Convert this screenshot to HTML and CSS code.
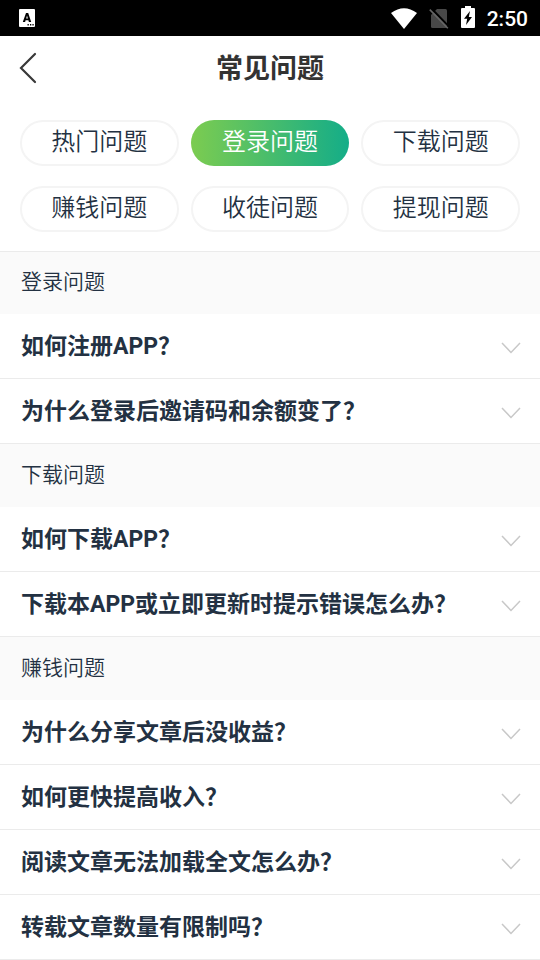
FILE: index.html
```html
<!DOCTYPE html>
<html lang="zh-CN">
<head>
<meta charset="utf-8">
<meta name="viewport" content="width=device-width, initial-scale=1">
<title>常见问题</title>
<link rel="stylesheet" href="styles.css">
</head>
<body>
<svg class="sprite" aria-hidden="true">
  <symbol id="chevron" viewBox="0 0 20 12"><path d="M1 1l9 9.500 9-9.500" fill="none" stroke="currentColor" stroke-width="1.5"/></symbol>
</svg>
<div class="status">
  <svg class="app-icon" viewBox="0 0 16 18" width="16" height="18" aria-hidden="true">
    <rect width="16" height="18" rx="1" fill="#fff"/>
    <path d="M7 4h2.200L12.200 13H9.900L9.400 11.300H6.600L6.100 13H3.800zM7.200 9.500h1.700L8 6.500z" fill="#000" fill-rule="evenodd"/>
    <path d="M8.500 15.700h1.300M11 15.700h1.300M13.400 15.700h1.300" stroke="#000" stroke-width="1.500"/>
  </svg>
  <div class="status-right">
    <svg width="26" height="21" viewBox="0 0 26 21" aria-hidden="true"><path d="M0 5Q13-4.500 26 5L13 21z" fill="#fff"/></svg>
    <svg width="20" height="21" viewBox="0 0 20 21" aria-hidden="true">
      <path d="M8 1h8.500q1.500 0 1.500 1.500V18.500q0 1.500-1.500 1.500h-13Q2 20 2 18.500V7z" fill="#484848"/>
      <path d="M2.200 .2L20 18.600" stroke="#000" stroke-width="2"/>
      <path d="M.8 1.600L18.800 20.300" stroke="#666" stroke-width="1.600"/>
    </svg>
    <svg class="battery" width="14" height="22" viewBox="0 0 14 22" aria-hidden="true">
      <path d="M4 0h6v2h3q1 0 1 1v18q0 1-1 1H1q-1 0-1-1V3q0-1 1-1h3z" fill="#fff"/>
      <path d="M9 5L3 12.800h3.200L5 19l6-8H7.800z" fill="#000"/>
    </svg>
    <time class="clock">2:50</time>
  </div>
</div>
<header class="bar">
  <button class="back" type="button" aria-label="返回">
    <svg width="18" height="32" viewBox="0 0 18 32" aria-hidden="true"><path d="M16 2L2 16l14 14" fill="none" stroke="#393939" stroke-width="2.200" stroke-linecap="round"/></svg>
  </button>
  <h1 class="title">常见问题</h1>
</header>
<nav class="tabs">
  <button class="tab" type="button">热门问题</button>
  <button class="tab active" type="button">登录问题</button>
  <button class="tab" type="button">下载问题</button>
  <button class="tab" type="button">赚钱问题</button>
  <button class="tab" type="button">收徒问题</button>
  <button class="tab" type="button">提现问题</button>
</nav>
<main>
  <section>
    <h2 class="group">登录问题</h2>
    <button class="row" type="button"><span>如何注册APP？</span><svg class="chevron"><use href="#chevron"/></svg></button>
    <button class="row" type="button"><span>为什么登录后邀请码和余额变了？</span><svg class="chevron"><use href="#chevron"/></svg></button>
  </section>
  <section>
    <h2 class="group">下载问题</h2>
    <button class="row" type="button"><span>如何下载APP？</span><svg class="chevron"><use href="#chevron"/></svg></button>
    <button class="row" type="button"><span>下载本APP或立即更新时提示错误怎么办？</span><svg class="chevron"><use href="#chevron"/></svg></button>
  </section>
  <section>
    <h2 class="group">赚钱问题</h2>
    <button class="row" type="button"><span>为什么分享文章后没收益？</span><svg class="chevron"><use href="#chevron"/></svg></button>
    <button class="row" type="button"><span>如何更快提高收入？</span><svg class="chevron"><use href="#chevron"/></svg></button>
    <button class="row" type="button"><span>阅读文章无法加载全文怎么办？</span><svg class="chevron"><use href="#chevron"/></svg></button>
    <button class="row" type="button"><span>转载文章数量有限制吗？</span><svg class="chevron"><use href="#chevron"/></svg></button>
  </section>
</main>
</body>
</html>
```
FILE: styles.css
```css
* {
  box-sizing: border-box;
}

body {
  margin: 0;
  background: #fff;
  color: #233142;
  font-family: Roboto, "Noto Sans CJK SC", sans-serif;
}

button {
  margin: 0;
  padding: 0;
  border: 0;
  background: none;
  color: inherit;
  font: inherit;
  cursor: pointer;
}

svg {
  display: block;
  flex: none;
}

.sprite {
  display: none;
}

.status {
  display: flex;
  align-items: center;
  justify-content: space-between;
  height: 36px;
  padding: 0 12px 0 19px;
  background: #000;
  color: #fff;
}

.status-right {
  display: flex;
  align-items: center;
  gap: 12px;
}

.battery {
  margin-bottom: 2px;
}

.clock {
  padding-top: 2px;
  font-size: 21px;
  font-weight: 500;
  line-height: 34px;
}

.bar {
  display: grid;
  grid-template-columns: 60px 1fr 60px;
  align-items: center;
  height: 64px;
}

.back {
  padding-left: 19px;
}

.title {
  margin: 0;
  padding-top: 2px;
  color: #333;
  font-size: 27px;
  font-weight: 700;
  line-height: 40px;
  text-align: center;
}

.tabs {
  display: grid;
  grid-template-columns: repeat(3, 1fr);
  gap: 20px 12px;
  padding: 20px 20px 19px;
}

.tab {
  height: 46px;
  padding-bottom: 2px;
  border: 2px solid #f4f4f4;
  border-radius: 23px;
  font-size: 24px;
  font-weight: 350;
  line-height: 36px;
}

.tab.active {
  border: 0;
  background: linear-gradient(90deg, #7ccc50, #14ad88);
  color: #fff;
}

.group {
  height: 63px;
  margin: 0;
  padding: 0 21px;
  border-top: 1px solid #ebebeb;
  background: #fafafa;
  font-size: 21px;
  font-weight: 350;
  line-height: 60px;
}

section + section .group {
  border-top-color: #fafafa;
}

.row {
  display: flex;
  align-items: center;
  justify-content: space-between;
  width: 100%;
  height: 65px;
  padding: 0 19px 4px 21px;
  border-bottom: 1px solid #ebebeb;
  font-size: 23px;
  font-weight: 700;
  text-align: left;
}

.chevron {
  width: 20px;
  height: 12px;
  margin-top: 8px;
  color: #c8c8c8;
}
```
